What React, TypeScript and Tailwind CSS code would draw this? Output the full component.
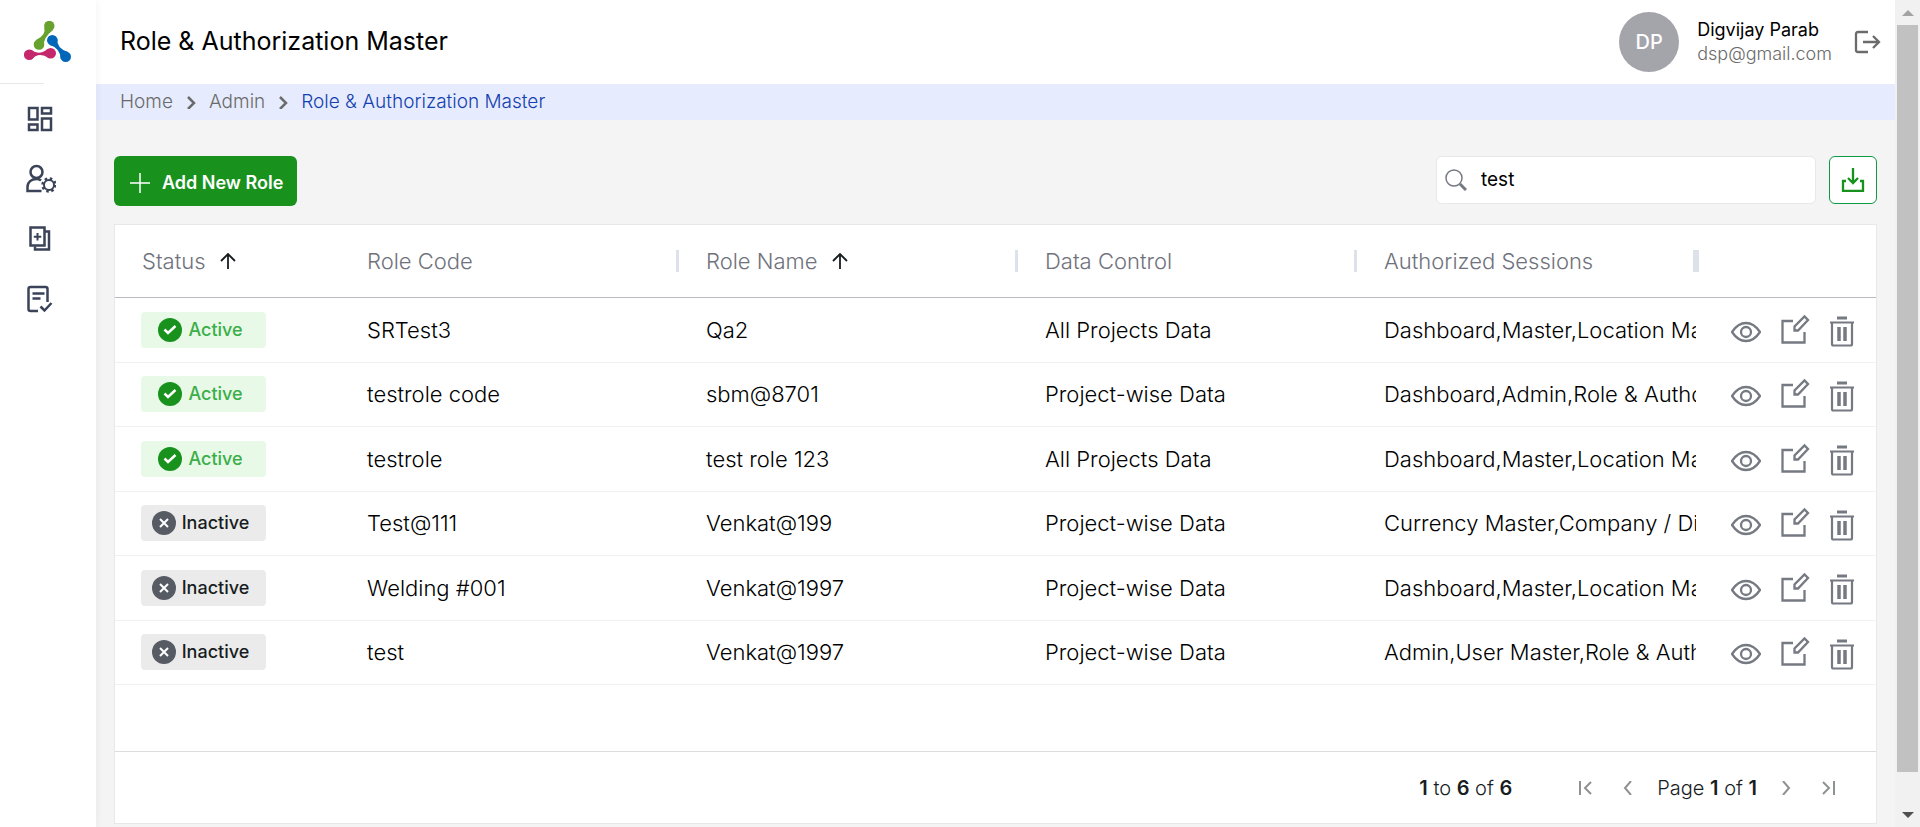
import React from "react";

type Role = { active: boolean; code: string; name: string; data: string; sessions: string };

const roles: Role[] = [
  { active: true, code: "SRTest3", name: "Qa2", data: "All Projects Data", sessions: "Dashboard,Master,Location Master" },
  { active: true, code: "testrole code", name: "sbm@8701", data: "Project-wise Data", sessions: "Dashboard,Admin,Role & Authorization Master" },
  { active: true, code: "testrole", name: "test role 123", data: "All Projects Data", sessions: "Dashboard,Master,Location Master" },
  { active: false, code: "Test@111", name: "Venkat@199", data: "Project-wise Data", sessions: "Currency Master,Company / Division" },
  { active: false, code: "Welding #001", name: "Venkat@1997", data: "Project-wise Data", sessions: "Dashboard,Master,Location Master" },
  { active: false, code: "test", name: "Venkat@1997", data: "Project-wise Data", sessions: "Admin,User Master,Role & Authorization Master" },
];

function Logo() {
  return (
    <svg width="48" height="42" viewBox="24 21 48 42" aria-hidden="true">
      <g fill="#67a22f">
        <circle cx="49.300" cy="26" r="5.200" />
        <circle cx="39" cy="44.500" r="5.300" />
        <path d="M44.2 27.5 Q46.500 35 36 40 L43.8 47 Q42.500 38 53 30 Z" />
      </g>
      <g fill="#c4276b">
        <circle cx="29.200" cy="54.700" r="5.300" />
        <circle cx="50.700" cy="53.300" r="5.300" />
        <path d="M31 49.800 Q39 56 48 48.800 L49 58.300 Q39 51 31 59.700 Z" />
      </g>
      <g fill="#0067b8">
        <circle cx="52.300" cy="40.200" r="5.300" />
        <circle cx="65.700" cy="56.700" r="5.300" />
        <path d="M57.200 38.500 Q56.500 48.500 68 52 L60.800 58.700 Q60 48 50 44.900 Z" />
      </g>
    </svg>
  );
}

function NavIcon({ kind }: { kind: "grid" | "user" | "copy" | "form" }) {
  return (
    <svg width="32" height="30" viewBox="0 0 32 30" fill="none" stroke="#3b4358" strokeWidth="2.500" aria-hidden="true">
      {kind === "grid" && (
        <path d="M5 4h8.500v11.500H5zM18 4h9v5.500h-9zM5 20.500h8.500V26H5zM18 14.500h9V26h-9z" />
      )}
      {kind === "user" && (
        <>
          <circle cx="12.500" cy="8" r="6" />
          <path d="M17.500 27H3.500v-4c0-5 4-8 9-8 2 0 3.500.5 4.500 1.500" />
          <circle cx="25" cy="21" r="5" strokeWidth="2" />
          <circle cx="25" cy="21" r="6.500" strokeDasharray="2.500 2.605" />
        </>
      )}
      {kind === "copy" && (
        <>
          <path d="M6.500 3.500h14v18h-14z" />
          <path d="M20.500 7.500h4.500V25.500H11v-3" />
          <path d="M13.500 9v7.500M9.800 12.700h7.500" strokeWidth="2" />
        </>
      )}
      {kind === "form" && (
        <>
          <path d="M14 27H6.500q-2 0-2-2V5q0-2 2-2h15q2 0 2 2v13" />
          <path d="M8.500 9.500h12M8.500 14.500h8M16.500 22.500l4 4 7-7.500" />
        </>
      )}
    </svg>
  );
}

function ViewIcon() {
  return (
    <svg width="30" height="22" viewBox="1 0 30 22" fill="none" stroke="#757982" strokeWidth="2.300" aria-hidden="true">
      <path d="M2 11Q8 2 16 2t14 9q-6 9-14 9T2 11z" />
      <circle cx="16" cy="11" r="5" />
    </svg>
  );
}

function EditIcon() {
  return (
    <svg width="28" height="30" viewBox="0 3 28 30" fill="none" stroke="#757982" strokeWidth="2.300" className="overflow-visible" aria-hidden="true">
      <path d="M12 7H1.500v21.500h22V18" />
      <path d="M13.500 16.500v-4L23.500 2.500l3.500 3.500-10 10.500z" />
    </svg>
  );
}

function TrashIcon() {
  return (
    <svg width="26" height="31" viewBox="0 0 26 31" fill="none" stroke="#757982" strokeWidth="2.200" aria-hidden="true">
      <path d="M8 2h10" strokeWidth="3" />
      <path d="M1 6.500h24M3 6.500v21.500q0 1.500 1.500 1.500h17q1.500 0 1.500-1.500V6.500" />
      <path d="M10 11v14M16 11v14" strokeWidth="3.500" />
    </svg>
  );
}

function SortArrow() {
  return (
    <svg width="16" height="16" viewBox="0 0 16 16" fill="none" stroke="#181d1f" strokeWidth="1.800" aria-hidden="true">
      <path d="M8 16V1M1 8l7-7 7 7" />
    </svg>
  );
}

function Chevron({ className, d }: { className: string; d: string }) {
  return (
    <svg width="14" height="14" viewBox="0 0 14 14" fill="none" stroke="currentColor" className={className} aria-hidden="true">
      <path d={d} />
    </svg>
  );
}

function StatusBadge({ active }: { active: boolean }) {
  return (
    <span
      className={
        active
          ? "flex h-9 w-[125px] items-center justify-center gap-[6px] rounded bg-[#e8f9e8] pr-[6px] text-lg font-medium text-[#3bae49]"
          : "flex h-9 w-[125px] items-center justify-center gap-[6px] rounded bg-[#ebebeb] pr-[6px] text-lg font-medium text-[#181d1f]"
      }
    >
      <svg width="24" height="24" viewBox="0 0 24 24" fill="none" stroke="#fff" strokeWidth="2.500" aria-hidden="true">
        <circle cx="12" cy="12" r="12" stroke="none" fill={active ? "#18921d" : "#575b64"} />
        {active ? <path d="M6.500 11.500l3.500 3.500 7.500-7" /> : <path strokeWidth="2" d="M8 8l8 8M16 8l-8 8" />}
      </svg>
      {active ? "Active" : "Inactive"}
    </span>
  );
}

function HeadCell({ label, sorted, divider }: { label: string; sorted?: boolean; divider?: boolean }) {
  return (
    <th scope="col" className="p-0 text-left font-light">
      <div className="flex items-center justify-between pl-[27px]">
        <span className="flex items-center gap-[14px]">
          {label}
          {sorted && <SortArrow />}
        </span>
        {divider && <span className="h-[22px] w-[3px] bg-[#dde1ea]" />}
      </div>
    </th>
  );
}

const navItems = [
  { kind: "grid", label: "Dashboard" },
  { kind: "user", label: "Admin" },
  { kind: "copy", label: "Masters" },
  { kind: "form", label: "Forms" },
] as const;

export default function App() {
  return (
    <div className="flex min-h-screen bg-[#f4f4f4] font-[Inter,'Noto_Sans',sans-serif] text-black">
      <aside className="z-10 flex w-24 shrink-0 flex-col bg-white shadow-[0_0_8px_rgba(0,0,0,0.06)]">
        <div className="flex h-[83px] items-center justify-center">
          <Logo />
        </div>
        <div className="h-px w-11 bg-[#e8e8e8]" />
        <nav className="flex flex-col gap-[30px] pt-5 pl-6">
          {navItems.map((n) => (
            <a key={n.kind} href="#" aria-label={n.label} className="flex h-[30px] w-8">
              <NavIcon kind={n.kind} />
            </a>
          ))}
        </nav>
      </aside>

      <div className="flex min-w-0 grow flex-col">
        <header className="flex h-[84px] items-center justify-between bg-white pr-[14px] pl-6">
          <h1 className="text-[25px]">Role &amp; Authorization Master</h1>
          <div className="flex items-center">
            <span className="flex size-[60px] items-center justify-center rounded-full bg-[#a4a4ab] text-xl font-medium text-white">DP</span>
            <div className="ml-[18px] text-lg leading-6">
              <p>Digvijay Parab</p>
              <p className="font-light text-[#6b6b6b]">dsp@gmail.com</p>
            </div>
            <button aria-label="Log out" className="ml-[22px]">
              <svg width="27" height="24" viewBox="0 0 27 24" fill="none" stroke="#6b6b6b" strokeWidth="2.300" aria-hidden="true">
                <path d="M14 2H4Q2 2 2 4v16q0 2 2 2h10M9 12h16M19 6l6 6-6 6" />
              </svg>
            </button>
          </div>
        </header>

        <nav aria-label="Breadcrumb" className="flex h-9 items-center gap-[11px] bg-[#e6ecfd] pl-6 text-[19px] leading-6 font-light text-[#6b6b6b]">
          <a href="#">Home</a>
          <Chevron className="stroke-[2.5px]" d="M4 2l6 6-6 6" />
          <a href="#">Admin</a>
          <Chevron className="stroke-[2.5px]" d="M4 2l6 6-6 6" />
          <a href="#" className="text-[#1440b0]">Role &amp; Authorization Master</a>
        </nav>

        <main className="flex grow flex-col pt-9 pr-[18px] pl-[18px]">
          <div className="flex items-start justify-between">
            <button className="flex h-[50px] items-center gap-3 rounded-md bg-[#18921d] pt-1 pr-[14px] pl-4 text-lg font-semibold text-white">
              <svg width="20" height="20" viewBox="0 0 20 20" stroke="#fff" strokeWidth="1.500" aria-hidden="true">
                <path d="M10 0v20M0 10h20" />
              </svg>
              Add New Role
            </button>
            <div className="flex gap-[13px]">
              <label className="flex h-12 w-[380px] items-center gap-[14px] rounded-md border border-[#e8e8e8] bg-white px-2">
                <svg width="22" height="22" viewBox="0 0 22 22" fill="none" stroke="#757982" aria-hidden="true">
                  <circle cx="9" cy="9" r="8" strokeWidth="1.500" />
                  <path d="M15 15l6 6" strokeWidth="3" />
                </svg>
                <input aria-label="Search roles" defaultValue="test" className="min-w-0 grow text-[19px] font-normal outline-none" />
              </label>
              <button aria-label="Download" className="flex size-12 items-center justify-center rounded-md border border-[#0d9a44] bg-white">
                <svg width="24" height="24" viewBox="0 0 24 24" fill="none" stroke="#18921d" strokeWidth="2.300" aria-hidden="true">
                  <path d="M12 0v15M7 10l5 5 5-5M5 13H2v10h20V13h-3" />
                </svg>
              </button>
            </div>
          </div>

          <section className="mt-[18px] mb-1 border border-[#e8e8e8] bg-white">
            <div className="h-[527px] border-b border-[#dcdcdc]">
              <table className="w-full table-fixed border-collapse text-[22px] leading-7 font-light">
                <colgroup>
                  <col className="w-[225px]" />
                  <col />
                  <col />
                  <col />
                  <col />
                  <col className="w-[180px]" />
                </colgroup>
                <thead>
                  <tr className="h-[72px] border-b border-[#b8bac6] text-[#6f727c]">
                    <HeadCell label="Status" sorted />
                    <HeadCell label="Role Code" divider />
                    <HeadCell label="Role Name" sorted divider />
                    <HeadCell label="Data Control" divider />
                    <HeadCell label="Authorized Sessions" divider />
                    <th scope="col" aria-label="Actions" className="p-0">
                      <div className="h-[22px] w-[3px] bg-[#dde1ea]" />
                    </th>
                  </tr>
                </thead>
                <tbody>
                  {roles.map((r, i) => (
                    <tr key={i} className="border-b border-[#f1f1f2] odd:h-[65px] even:h-16">
                      <td className="p-0 pl-[26px]"><StatusBadge active={r.active} /></td>
                      <td className="p-0 pl-[27px]">{r.code}</td>
                      <td className="p-0 pl-[27px]">{r.name}</td>
                      <td className="p-0 pl-[27px]">{r.data}</td>
                      <td className="p-0 pl-[27px]"><div className="overflow-hidden whitespace-nowrap">{r.sessions}</div></td>
                      <td className="p-0">
                        <div className="flex items-center justify-end gap-5 pt-1 pr-[21px]">
                          <button aria-label={"View " + r.code}><ViewIcon /></button>
                          <button aria-label={"Edit " + r.code}><EditIcon /></button>
                          <button aria-label={"Delete " + r.code}><TrashIcon /></button>
                        </div>
                      </td>
                    </tr>
                  ))}
                </tbody>
              </table>
            </div>
            <div className="flex h-[71px] items-center justify-end gap-[22px] pr-[41px] text-xl font-light text-[#181d1f]">
              <p className="mr-[45px]"><b className="font-semibold">1</b> to <b className="font-semibold">6</b> of <b className="font-semibold">6</b></p>
              <div className="flex gap-7 text-[#8f9192]">
                <button aria-label="First page"><Chevron className="stroke-2" d="M1 0v14M12 1L6 7l6 6" /></button>
                <button aria-label="Previous page"><Chevron className="stroke-2" d="M10 0L4 7l6 7" /></button>
              </div>
              <p>Page <b className="font-semibold">1</b> of <b className="font-semibold">1</b></p>
              <div className="flex gap-7 text-[#8f9192]">
                <button aria-label="Next page"><Chevron className="stroke-2" d="M4 0l6 7-6 7" /></button>
                <button aria-label="Last page"><Chevron className="stroke-2" d="M2 1l6 6-6 6M13 0v14" /></button>
              </div>
            </div>
          </section>
        </main>
      </div>

      <div aria-hidden="true" className="flex w-[25px] shrink-0 flex-col items-center bg-[#f1f1f1] py-[10px]">
        <svg width="12" height="6" viewBox="0 0 12 6"><path d="M6 0l6 6H0z" fill="#a3a3a3" /></svg>
        <div className="mt-[9px] mb-10 w-[21px] grow bg-[#c1c1c1]" />
        <svg width="12" height="6" viewBox="0 0 12 6"><path d="M0 0h12L6 6z" fill="#505050" /></svg>
      </div>
    </div>
  );
}
